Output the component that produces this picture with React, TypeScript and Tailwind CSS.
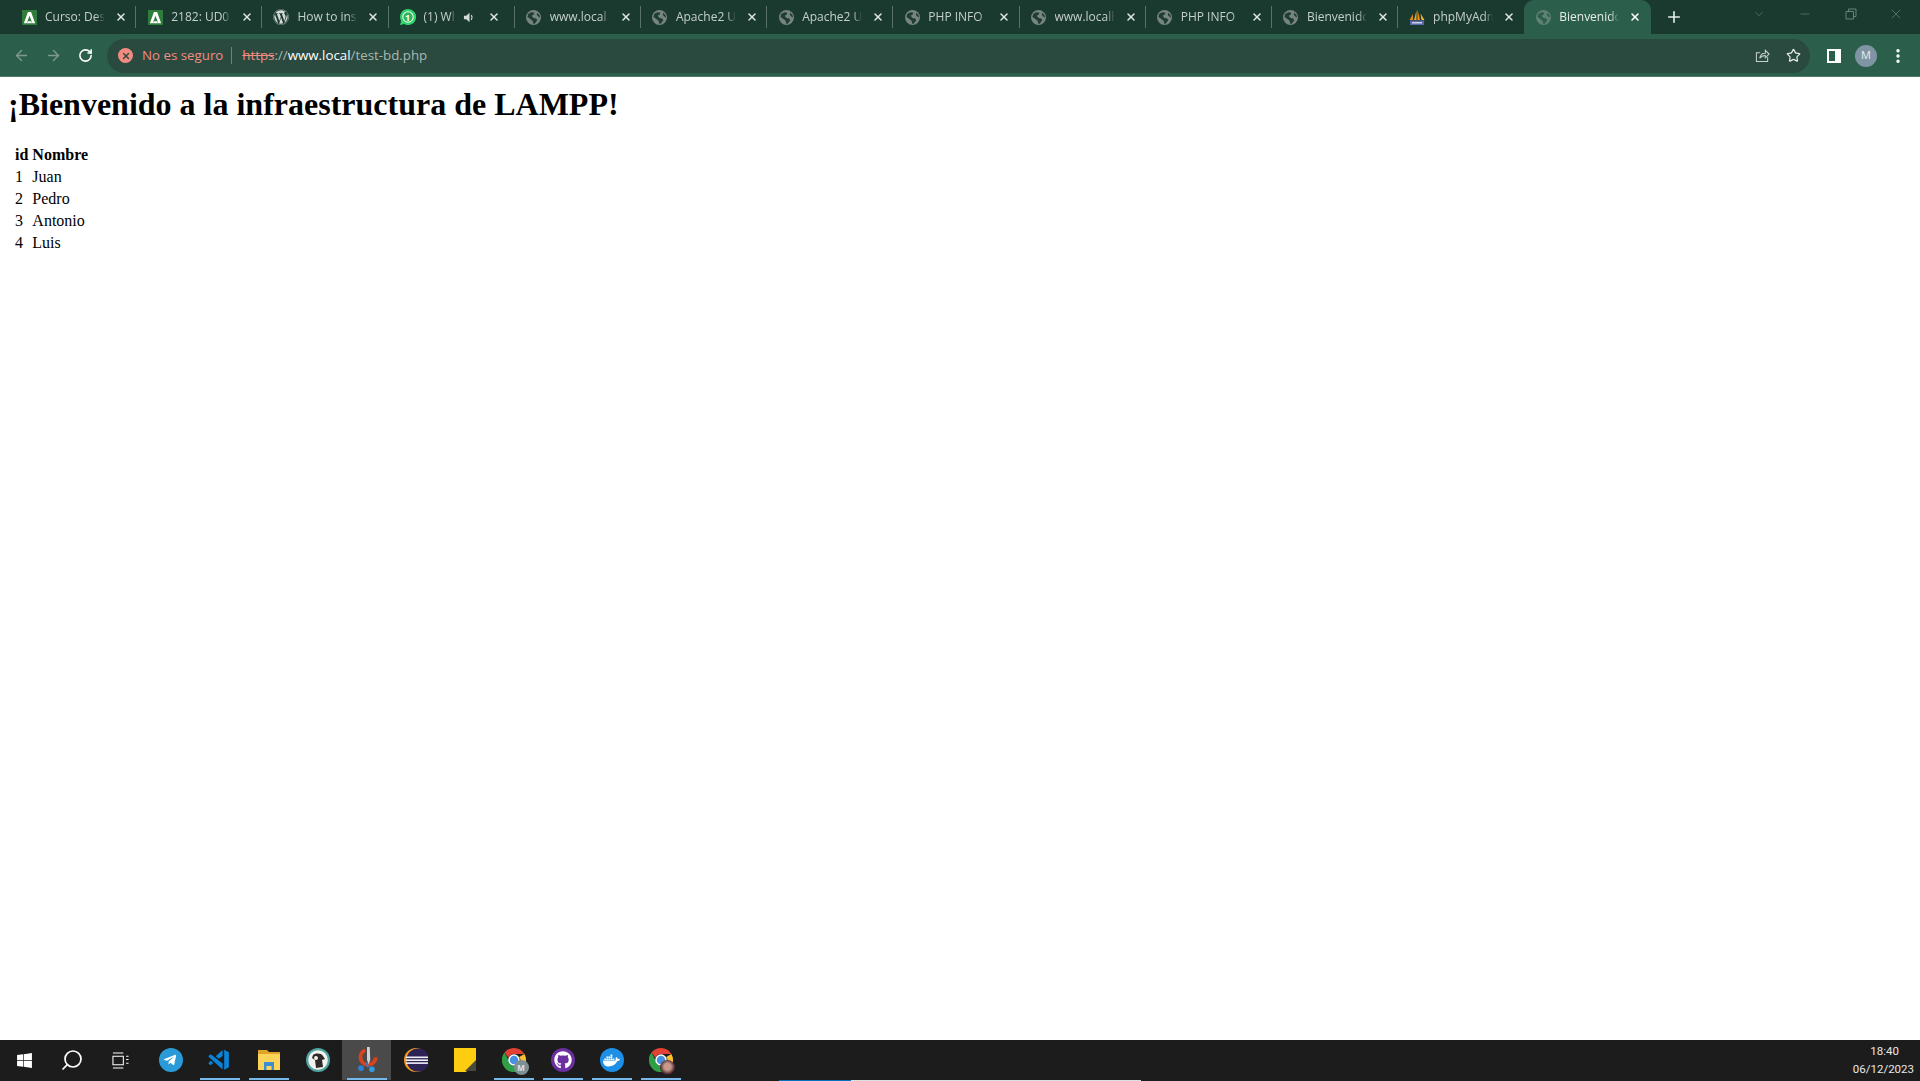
import type { ReactNode } from 'react'
import { ArrowLeft, ArrowRight, Minus, Plus, RotateCw, Search, Star, X, ChevronDown, MoreVertical } from 'lucide-react'
import { FaWordpress, FaWindows, FaTelegramPlane, FaGithub, FaDocker } from 'react-icons/fa'
import { VscVscodeInsiders } from 'react-icons/vsc'

const Aula = () => (
    <div className="flex h-[15px] w-[15px] items-center justify-center bg-[#2f7d3a]">
        <svg viewBox="0 0 16 16" className="h-[15px] w-[15px]"><path d="M6.300 2h3.400L14 14h-3l-3-8-3 8H2z" fill="#fff" /><path d="M6.200 12h3.600l1 2H5.200z" fill="#fff" /></svg>
    </div>
)

const Globe = ({ active }: { active?: boolean }) => (
    <svg viewBox="0 0 16 16" className="h-[15px] w-[15px]">
        <circle cx="8" cy="8" r="8" fill={active ? '#5f8173' : '#77857f'} />
        <path d="M2.500 4 6 2.500l3 .5-1 2-2 1 2 2.500 3 .5 1 2-2.500 3.500L8 15l-1-3.500L4 9 1.500 7.500z M12 3l2.500 2.500L15 8l-2-1-1.500-2z" fill={active ? '#2c5e4c' : '#1f3d34'} />
    </svg>
)

const Sails = () => (
    <svg viewBox="0 0 16 16" className="h-[17px] w-[17px]">
        <path d="M8.500 0 11 10.500H8.500z" fill="#f29111" />
        <path d="M7.500 1 5 10.500h2.500z" fill="#eea52f" />
        <path d="M11.500 4 15.500 10.500h-3z" fill="#f6b73c" />
        <path d="M4 4.500 .5 10.500H4z" fill="#d98a1f" />
        <rect x="1" y="11" width="14" height="4.500" fill="#5c69a8" />
        <rect x="3" y="12.500" width="10" height="1.500" fill="#c9cfe6" />
    </svg>
)

const Whatsapp = () => (
    <div className="relative flex h-4 w-4 items-center justify-center">
        <svg viewBox="0 0 16 16" className="h-4 w-4"><path d="M8 0a8 8 0 1 1-3.800 15L0 16l1.100-4A8 8 0 0 1 8 0z" fill="#2fd36b" /><circle cx="8" cy="8" r="5.700" fill="#f1fbf4" /><circle cx="8" cy="8" r="4.700" fill="#2fb35a" /></svg>
        <span className="absolute inset-0 flex items-center justify-center text-[9px] leading-none font-bold text-white">1</span>
    </div>
)

const Speaker = () => (
    <svg viewBox="0 0 14 14" className="ml-[8px] h-[13px] w-[13px] shrink-0" fill="#d5dbd8">
        <path d="M1 5h2.500L7 2v10L3.500 9H1z" />
        <path d="M9 4.500c1 1.500 1 3.500 0 5" fill="none" stroke="#d5dbd8" strokeWidth="1.300" />
    </svg>
)

interface TabRecord {
    title: string
    icon: ReactNode
    sound?: boolean
}

const tabs: TabRecord[] = [
    { title: 'Curso: Despliegue', icon: <Aula /> },
    { title: '2182: UD03 Servidor', icon: <Aula /> },
    { title: 'How to install', icon: <FaWordpress className="h-4 w-4 text-[#d5d9d7]" /> },
    { title: '(1) WhatsApp', icon: <Whatsapp />, sound: true },
    { title: 'www.local', icon: <Globe /> },
    { title: 'Apache2 Ubuntu', icon: <Globe /> },
    { title: 'Apache2 Ubuntu', icon: <Globe /> },
    { title: 'PHP INFO', icon: <Globe /> },
    { title: 'www.localhost', icon: <Globe /> },
    { title: 'PHP INFO', icon: <Globe /> },
    { title: 'Bienvenido a la', icon: <Globe /> },
    { title: 'phpMyAdmin', icon: <Sails /> },
]

function Tab({ tab, last }: { tab: TabRecord; last: boolean }) {
    return (
        <div className={`flex h-[34px] w-[126.2px] shrink-0 items-center pl-[11px] pr-[9px] ${last ? '' : 'relative after:absolute after:right-0 after:top-[6px] after:h-[22px] after:w-px after:bg-[#5b7269]'}`}>
            <div className="flex h-4 w-4 shrink-0 items-center justify-center">{tab.icon}</div>
            <div className={`ml-2 overflow-hidden whitespace-nowrap text-xs text-[#c5cfcb] [mask-image:linear-gradient(to_right,black_85%,transparent)] ${tab.sound ? 'w-[31px]' : 'w-[60px]'}`}>
                {tab.title}
            </div>
            {tab.sound && <Speaker />}
            <X className={`h-3 w-3 shrink-0 text-[#dfe5e2] ${tab.sound ? 'ml-[12px]' : 'ml-[10px]'}`} strokeWidth={3} />
        </div>
    )
}

function Chrome({ badge }: { badge: 'm' | 'photo' }) {
    return (
        <div className="relative h-6 w-6">
            <svg viewBox="0 0 24 24" className="h-6 w-6">
                <path d="M12 0a12 12 0 0 1 10.400 6H12a6 6 0 0 0-5.600 3.800L2.500 4.600A12 12 0 0 1 12 0z" fill="#e34133" />
                <path d="M22.400 6A12 12 0 0 1 13 24l4.200-7.600A6 6 0 0 0 17.200 9L22.400 6z" fill="#fbc02d" />
                <path d="M13 24A12 12 0 0 1 2.500 4.600l4.600 8.600A6 6 0 0 0 17.200 16.400z" fill="#2f9e44" />
                <circle cx="12" cy="12" r="5" fill="#4a90e2" stroke="#fff" strokeWidth="1.500" />
            </svg>
            {badge === 'm' ? (
                <div className="absolute -bottom-[3px] -right-[3px] flex h-[15px] w-[15px] items-center justify-center rounded-full bg-[#7d8f95] text-[8px] font-bold text-[#dfe5e7]">M</div>
            ) : (
                <div className="absolute -bottom-[3px] -right-[2px] h-[15px] w-[15px] rounded-full bg-[radial-gradient(circle_at_50%_45%,#c99a8c_30%,#3a1a22_70%)]" />
            )}
        </div>
    )
}

const Folder = () => (
    <svg viewBox="0 0 24 24" className="h-6 w-6">
        <path d="M1 2h9l2 2h11v5H1z" fill="#e0a526" />
        <path d="M1 6h22v16H1z" fill="#fcd45a" />
        <path d="M7 14h10v8h-2.500v-4h-5v4H7z" fill="#3a8ed4" />
    </svg>
)

const DBeaver = () => (
    <svg viewBox="0 0 24 24" className="h-6 w-6">
        <circle cx="12" cy="12" r="12" fill="#4fa3a0" />
        <circle cx="12" cy="12" r="9.800" fill="#f2f2ee" />
        <path d="M7 7c3-2 8-2 10 1l2 3-3 1 1 7-7 1-1-8-3-2z" fill="#2e2926" />
        <circle cx="10" cy="10" r="2" fill="#f2f2ee" />
    </svg>
)

const Snip = () => (
    <svg viewBox="0 0 24 24" className="h-[26px] w-[26px]">
        <circle cx="13" cy="9.500" r="7" fill="none" stroke="#d8431f" strokeWidth="3.500" strokeDasharray="30 14" />
        <path d="M12 0h2.500L15 12l-1.500 4L12 12z" fill="#cfd3d6" />
        <path d="M12 14l2 4.500-1.800.5-1.500-4z" fill="#2f7fd6" />
        <circle cx="6.500" cy="19.500" r="2.600" fill="#2f7fd6" />
        <circle cx="16.500" cy="20.500" r="2.600" fill="#2f9ae0" />
    </svg>
)

const Eclipse = () => (
    <svg viewBox="0 0 24 24" className="h-6 w-6">
        <circle cx="12" cy="12" r="12" fill="#f29a1f" />
        <circle cx="14" cy="12" r="11.500" fill="#2c2255" />
        <rect x="2" y="8.500" width="23" height="1.600" fill="#f3f1fa" />
        <rect x="2" y="11.400" width="23" height="1.600" fill="#f3f1fa" />
        <rect x="2" y="14.300" width="23" height="1.600" fill="#f3f1fa" />
    </svg>
)

const Sticky = () => (
    <svg viewBox="0 0 24 24" className="h-6 w-6">
        <path d="M1 0h22v13L13 24H1z" fill="#ffcd0f" />
        <path d="M23 12v11H12z" fill="#4a4a3c" />
    </svg>
)

const launcher: { icon: ReactNode; open?: boolean; active?: boolean }[] = [
    { icon: <div className="flex h-6 w-6 items-center justify-center rounded-full bg-[#2a9bd8]"><FaTelegramPlane className="h-[14px] w-[14px] -translate-x-px text-white" /></div> },
    { icon: <VscVscodeInsiders className="h-[25px] w-[25px] text-[#0b83d6]" />, open: true },
    { icon: <Folder />, open: true },
    { icon: <DBeaver /> },
    { icon: <Snip />, open: true, active: true },
    { icon: <Eclipse /> },
    { icon: <Sticky /> },
    { icon: <Chrome badge="m" />, open: true },
    { icon: <div className="flex h-6 w-6 items-center justify-center rounded-full bg-[#6b2fa0]"><FaGithub className="h-[18px] w-[18px] text-white" /></div>, open: true },
    { icon: <div className="flex h-6 w-6 items-center justify-center rounded-full bg-[#1d8fe6]"><FaDocker className="h-[17px] w-[17px] text-white" /></div>, open: true },
    { icon: <Chrome badge="photo" />, open: true },
]

const rows = [
    [1, 'Juan'],
    [2, 'Pedro'],
    [3, 'Antonio'],
    [4, 'Luis'],
]

export default function App() {
    return (
        <div className="flex h-[1081px] w-[1920px] flex-col overflow-hidden bg-white font-['Open_Sans',sans-serif]">
            {/* Tab strip */}
            <div className="flex h-[34px] shrink-0 items-start bg-[#1a3a30] pl-[10px]">
                {tabs.map((tab, idx) => (
                    <Tab key={idx} tab={tab} last={idx === tabs.length - 1} />
                ))}
                <div className="flex h-[34px] w-[127px] shrink-0 items-center rounded-t-[10px] bg-[#2c5e4c] pl-[11px]">
                    <div className="flex h-4 w-4 shrink-0 items-center justify-center"><Globe active /></div>
                    <div className="ml-2 w-[60px] overflow-hidden whitespace-nowrap text-xs text-[#e6ecea] [mask-image:linear-gradient(to_right,black_85%,transparent)]">Bienvenido a la</div>
                    <X className="ml-[10px] h-3 w-3 shrink-0 text-white" strokeWidth={3} />
                </div>
                <Plus className="ml-[14px] mt-[8px] h-[18px] w-[18px] shrink-0 text-[#e6ecea]" strokeWidth={2.2} />
                <div className="ml-auto flex h-[28px] items-center pr-[16px] text-[#6f8a80]">
                    <ChevronDown className="h-[14px] w-[14px]" strokeWidth={1} />
                    <Minus className="ml-[32px] h-[14px] w-[14px]" strokeWidth={1} />
                    <svg viewBox="0 0 12 12" className="ml-[33px] h-3 w-3" fill="none" stroke="currentColor" strokeWidth="0.9"><path d="M1 3.500h7.500V11H1zM3.500 3.500V1H11v7.500H8.500" /></svg>
                    <X className="ml-[31px] h-[16px] w-[16px]" strokeWidth={1} />
                </div>
            </div>

            {/* Toolbar */}
            <div className="flex h-[43px] shrink-0 items-center border-b border-[#4f7a6a] bg-[#2c5e4c] pt-px">
                <ArrowLeft className="ml-[13px] h-[17px] w-[17px] text-[#7d9a8f]" strokeWidth={2} />
                <ArrowRight className="ml-[15px] h-[17px] w-[17px] text-[#7d9a8f]" strokeWidth={2} />
                <RotateCw className="ml-[16px] h-[15px] w-[15px] text-white" strokeWidth={2.5} />
                <div className="ml-[14px] flex h-[34px] w-[1703px] items-center rounded-full bg-[#2a4a40] pl-[11px] text-[13.300px]">
                    <div className="flex h-[15px] w-[15px] items-center justify-center rounded-full bg-[#f28b82]">
                        <X className="h-[10px] w-[10px] text-[#2a4a40]" strokeWidth={3.5} />
                    </div>
                    <span className="ml-[9px] text-[#f28b82]">No es seguro</span>
                    <div className="ml-[8px] h-[17px] w-px bg-[#6d8379]" />
                    <span className="ml-[10px] text-[#f28b82] line-through">https</span>
                    <span className="text-[#a9b8b2]">://</span>
                    <span className="text-white">www.local</span>
                    <span className="text-[#a9b8b2]">/test-bd.php</span>
                    <svg viewBox="0 0 16 16" className="ml-auto h-[15px] w-[15px] text-[#c6d0cc]" fill="none" stroke="currentColor" strokeWidth="1.100"><path d="M13.500 9.500v5h-12V5h4" /><path d="M5 11c.5-3.500 3-5.500 6-5.500V2.500L15 6.500l-4 4V8c-2.500 0-4.500 1-6 3z" /></svg>
                    <Star className="ml-[16px] mr-[9px] h-[15px] w-[15px] text-[#e4e9e7]" strokeWidth={2} />
                </div>
                <div className="ml-[17px] h-[14px] w-[14px] border-[2px] border-r-[6px] border-white" />
                <div className="ml-[14px] flex h-[22px] w-[22px] items-center justify-center rounded-full bg-[#7f95a3] text-[11px] text-[#e8edf0]">M</div>
                <MoreVertical className="ml-[12px] h-[18px] w-[18px] text-white" strokeWidth={2.5} />
            </div>

            {/* Page */}
            <main className="flex-1 pl-2 pt-[9px] font-['Liberation_Serif',serif] text-black">
                <h1 className="text-[32px] leading-[37px] font-bold">¡Bienvenido a la infraestructura de LAMPP!</h1>
                <table className="ml-[6px] mt-[21px] text-base leading-[18px]">
                    <thead>
                        <tr>
                            <th className="px-px py-[2px] text-left font-bold">id</th>
                            <th className="py-[2px] pl-[3px] text-left font-bold">Nombre</th>
                        </tr>
                    </thead>
                    <tbody>
                        {rows.map(([id, name]) => (
                            <tr key={id}>
                                <td className="px-px py-[2px]">{id}</td>
                                <td className="py-[2px] pl-[3px]">{name}</td>
                            </tr>
                        ))}
                    </tbody>
                </table>
            </main>

            {/* Taskbar */}
            <div className="flex h-[41px] shrink-0 flex-col bg-[#1c1c1c]">
                <div className="flex h-[40px] items-stretch">
                    <div className="flex w-[48px] items-center justify-center"><FaWindows className="h-[17px] w-[17px] text-white" /></div>
                    <div className="flex w-[48px] items-center justify-center"><Search className="h-[24px] w-[24px] -scale-x-100 text-white" strokeWidth={1.7} /></div>
                    <div className="flex w-[48px] items-center justify-center">
                        <svg viewBox="0 0 18 18" className="h-[17px] w-[17px]" fill="none" stroke="#fff" strokeWidth="1.100"><path d="M1 1h11M1 17h11M1 4.500h11v9H1zM15 4.500h2.500M15 8h2.500M15 12h2.500" /></svg>
                    </div>
                    <div className="ml-[2px] flex">
                        {launcher.map((item, idx) => (
                            <div key={idx} className={`relative flex w-[49px] items-center justify-center ${item.active ? 'bg-[#4a4a4a]' : ''}`}>
                                {item.icon}
                                {item.open && <div className="absolute bottom-0 left-[5px] right-[4px] h-[2px] bg-[#76b9ed]" />}
                            </div>
                        ))}
                    </div>
                    <div className="ml-auto flex flex-col items-end justify-center pr-[6px] text-[11.500px] leading-[18px] text-[#e8e8e8] font-['Roboto',sans-serif]">
                        <span className="pr-[15px]">18:40</span>
                        <span>06/12/2023</span>
                    </div>
                </div>
                <div className="flex h-px pl-[779px]">
                    <div className="w-[72px] bg-[#0a6fc4]" />
                    <div className="w-[290px] bg-[#dddddd]" />
                </div>
            </div>
        </div>
    )
}
